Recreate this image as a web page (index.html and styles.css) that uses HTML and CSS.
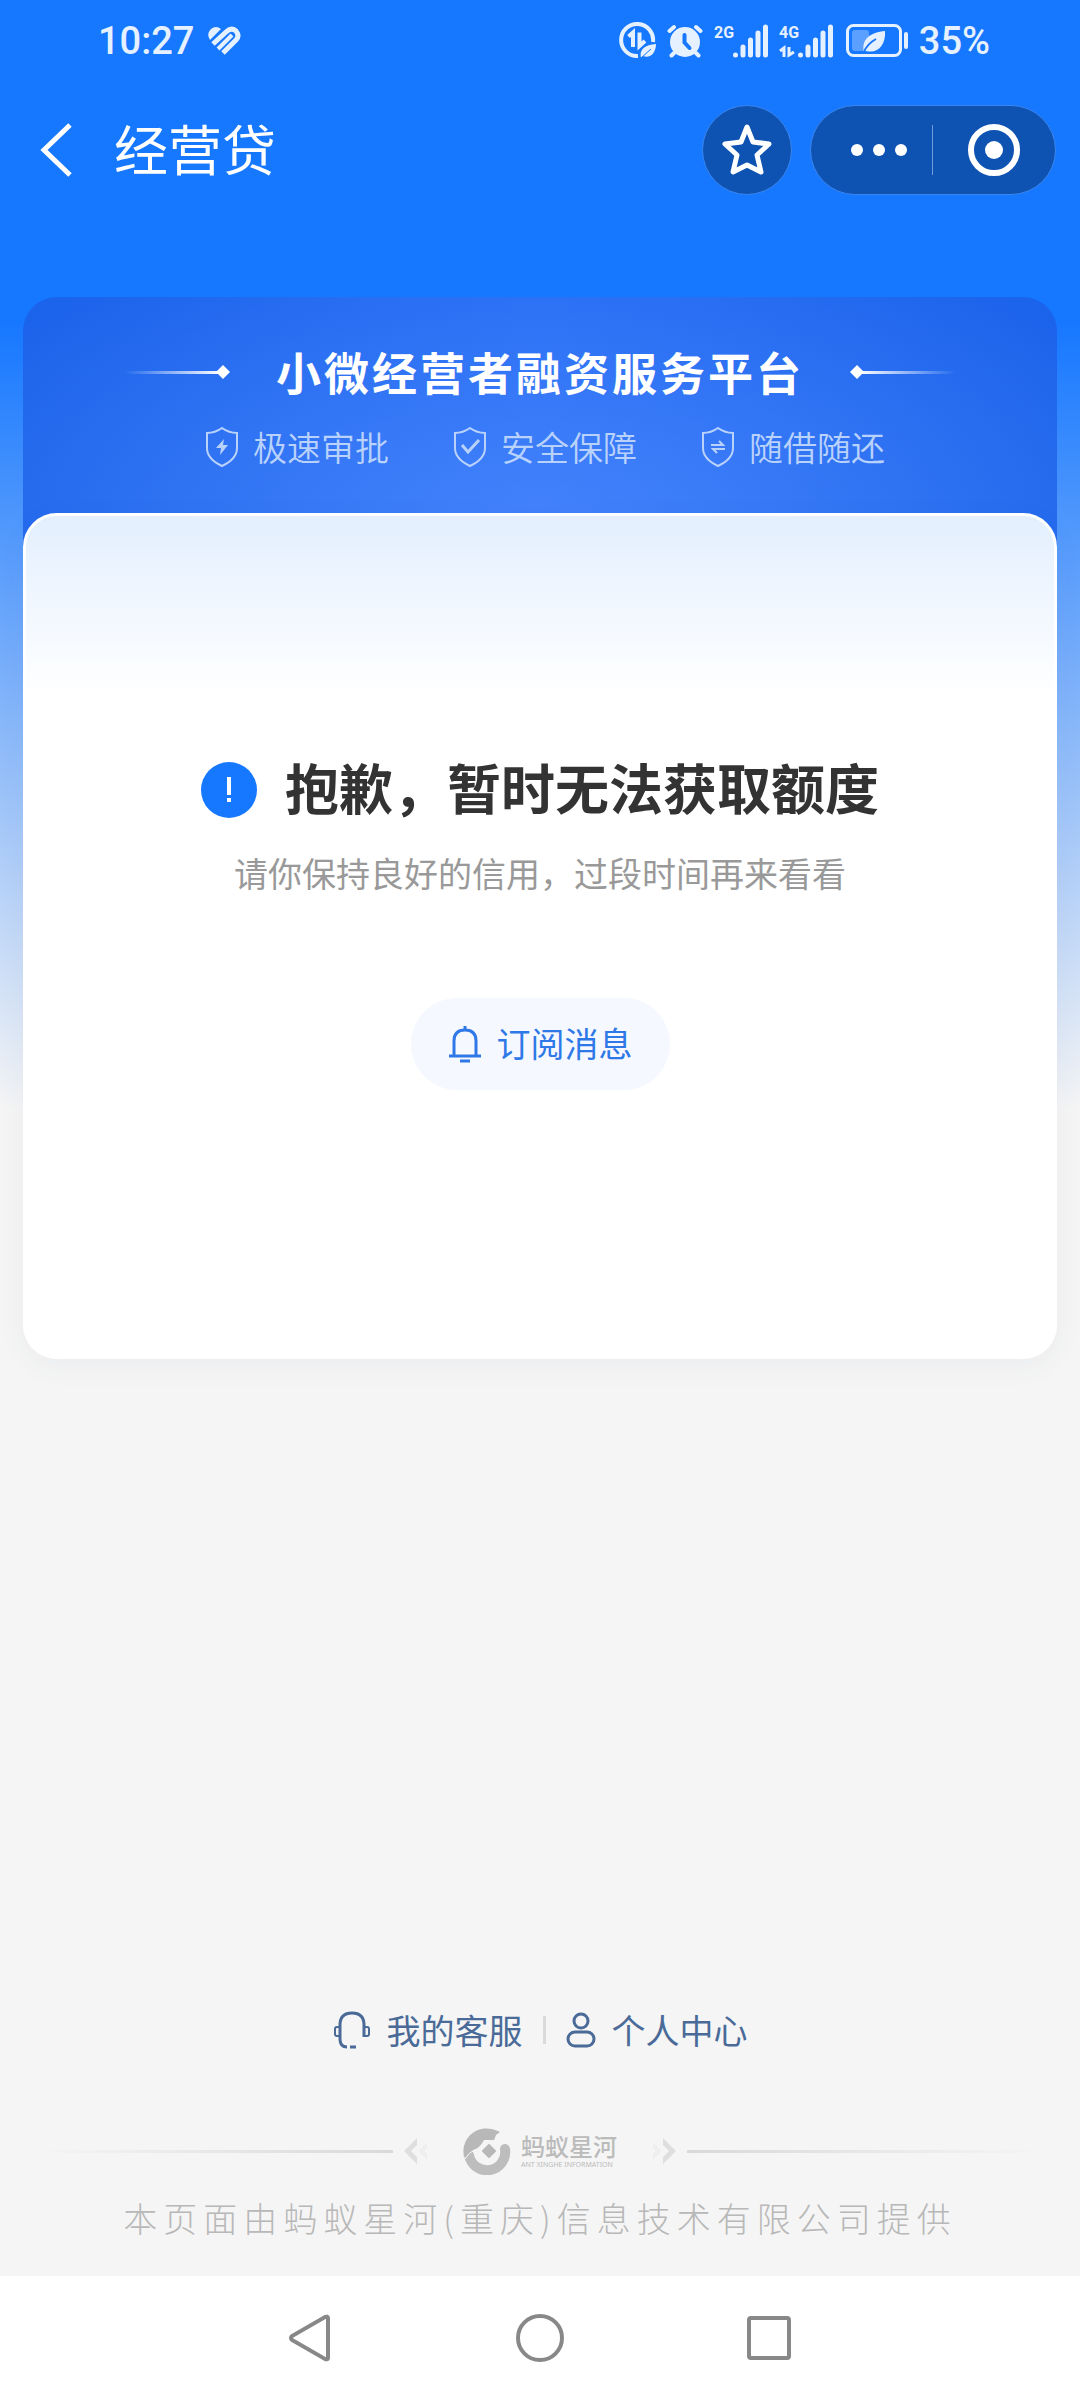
FILE: index.html
```html
<!DOCTYPE html>
<html lang="zh-CN">
<head>
<meta charset="utf-8">
<meta name="viewport" content="width=device-width, initial-scale=1">
<title>经营贷</title>
<link rel="stylesheet" href="styles.css">
</head>
<body>
<div class="page">
  <div class="status-bar">
    <div class="status-group status-left">
      <span>10:27</span>
      <svg width="34" height="30" viewBox="0 0 34 30" fill="none" stroke="currentColor" stroke-width="5">
        <path d="M3 14Q-1 8 4 3Q9 -1 14 3Z" fill="currentColor" stroke="none"/>
        <path d="M6 18 19 6Q24 1 29 5Q33 10 29 14L16 27"/>
        <path d="M11 23 25 9" stroke-width="4"/>
      </svg>
    </div>
    <div class="status-group status-right">
      <svg width="37" height="37" viewBox="0 0 37 37" fill="none" stroke="currentColor">
        <path d="M34 20A16 16 0 1 0 19 34" stroke-width="4"/>
        <path d="M9.500 14.500 14 10.500V25M20.500 10.500V24L26 19" stroke-width="4"/>
        <path d="M22 36C20 27 26 23 37 22C37 31 31 37 24 34" fill="currentColor" stroke="none"/>
        <path d="M22 36 32 27" stroke="#1677ff" stroke-width="1"/>
      </svg>
      <svg width="36" height="34" viewBox="0 0 36 34" fill="none" stroke="currentColor" stroke-width="4" stroke-linecap="round">
        <circle cx="18" cy="18" r="15" fill="currentColor" stroke="none"/>
        <path d="M2.500 7 7 3M33.500 7 29 3M7 29 4.500 31.500M29 29 31.500 31.500"/>
        <path d="M17.500 11V18.500L22.500 24" stroke="#1677ff"/>
      </svg>
      <svg width="54" height="34" viewBox="0 0 54 34" fill="none" stroke="currentColor" stroke-width="5" stroke-linecap="round">
        <text class="signal-label" x="0" y="14">2G</text>
        <path d="M21.500 31V31.100M29 23V31M36.500 16V31M44 9V31M51.500 3V31"/>
      </svg>
      <svg width="54" height="34" viewBox="0 0 54 34" fill="none" stroke="currentColor" stroke-width="5" stroke-linecap="round">
        <text class="signal-label" x="0" y="14">4G</text>
        <path d="M21.500 31V31.100M29 23V31M36.500 16V31M44 9V31M51.500 3V31"/>
        <path d="M1 27 5 24V33M10 23V31L15 28" stroke-width="3" stroke-linecap="butt"/>
      </svg>
      <svg width="64" height="34" viewBox="0 0 64 34" fill="none">
        <rect x="3.500" y="1.500" width="53" height="30" rx="6" stroke="currentColor" stroke-width="3"/>
        <rect x="8" y="6" width="17" height="21" rx="3" fill="#fff" opacity=".3"/>
        <path d="M20 28C17 15 27 8 41 7C42 21 34 30 22 27Z" fill="currentColor"/>
        <path d="M20 28Q23 20 32 15" stroke="#1677ff" stroke-width="2"/>
        <path d="M62 10V23" stroke="currentColor" stroke-width="4" stroke-linecap="round"/>
      </svg>
      <span>35%</span>
    </div>
  </div>

  <header class="nav-bar">
    <button class="back" type="button" aria-label="返回">
      <svg width="32" height="54" viewBox="0 0 32 54" fill="none" stroke="currentColor" stroke-width="5"><path d="M30 2 4 27 30 52"/></svg>
    </button>
    <h1 class="nav-title">经营贷</h1>
    <button class="pill favorite" type="button" aria-label="收藏">
      <svg width="52" height="52" viewBox="0 0 52 52" fill="none" stroke="currentColor" stroke-width="5" stroke-linejoin="round"><path d="M26 3 32 18 48 20 36 31 40 48 26 41 12 48 16 31 4 20 20 18Z"/></svg>
    </button>
    <div class="pill capsule">
      <button type="button" aria-label="更多">
        <svg width="58" height="14" viewBox="0 0 58 14" fill="currentColor"><circle cx="7" cy="7" r="6"/><circle cx="29" cy="7" r="6"/><circle cx="51" cy="7" r="6"/></svg>
      </button>
      <button type="button" aria-label="关闭">
        <svg width="54" height="54" viewBox="0 0 54 54"><circle cx="27" cy="27" r="23" fill="none" stroke="currentColor" stroke-width="6"/><circle cx="27" cy="27" r="9" fill="currentColor"/></svg>
      </button>
    </div>
  </header>

  <main class="card">
    <section class="banner">
      <div class="banner-heading">
        <svg width="106" height="16" viewBox="0 0 106 16">
          <defs><linearGradient id="ray"><stop offset="0" stop-color="#fff" stop-opacity="0"/><stop offset="1" stop-color="#fff"/></linearGradient></defs>
          <rect y="7" width="96" height="3" fill="url(#ray)"/><path d="M98 1 105 8 98 15 91 8Z" fill="#fff"/>
        </svg>
        <h2>小微经营者融资服务平台</h2>
        <svg width="106" height="16" viewBox="0 0 106 16">
          <defs><linearGradient id="ray-end"><stop offset="0" stop-color="#fff"/><stop offset="1" stop-color="#fff" stop-opacity="0"/></linearGradient></defs>
          <rect x="10" y="7" width="96" height="3" fill="url(#ray-end)"/><path d="M8 1 15 8 8 15 1 8Z" fill="#fff"/>
        </svg>
      </div>
      <ul class="features">
        <li>
          <svg width="34" height="42" viewBox="0 0 34 42" fill="none" stroke="currentColor" stroke-width="2"><path d="M17 2Q24 7 32 7V22Q32 33 17 40Q2 33 2 22V7Q10 7 17 2Z"/><path d="M19 13 11 22H16L15 29 23 19H18Z" fill="currentColor" stroke="none"/></svg>
          极速审批
        </li>
        <li>
          <svg width="34" height="42" viewBox="0 0 34 42" fill="none" stroke="currentColor" stroke-width="2"><path d="M17 2Q24 7 32 7V22Q32 33 17 40Q2 33 2 22V7Q10 7 17 2Z"/><path d="M9 19 15 26 26 14" stroke-width="3"/></svg>
          安全保障
        </li>
        <li>
          <svg width="34" height="42" viewBox="0 0 34 42" fill="none" stroke="currentColor" stroke-width="2"><path d="M17 2Q24 7 32 7V22Q32 33 17 40Q2 33 2 22V7Q10 7 17 2Z"/><path d="M10 19H22L18 15M24 23H12L16 27"/></svg>
          随借随还
        </li>
      </ul>
    </section>

    <section class="panel">
      <div class="notice">
        <svg width="56" height="56" viewBox="0 0 56 56"><circle cx="28" cy="28" r="28" fill="#1677ff"/><path d="M28 15V33M28 36V40" stroke="#fff" stroke-width="4"/></svg>
        <h2>抱歉，暂时无法获取额度</h2>
      </div>
      <p class="hint">请你保持良好的信用，过段时间再来看看</p>
      <button class="subscribe" type="button">
        <svg width="34" height="38" viewBox="0 0 34 38" fill="none" stroke="currentColor" stroke-width="3"><path d="M17 1V6M6 31V16Q6 5 17 5Q28 5 28 16V31M1 31H33M12 36H22"/></svg>
        <span>订阅消息</span>
      </button>
    </section>
  </main>

  <footer class="footer">
    <nav class="links">
      <a href="#service">
        <svg width="38" height="38" viewBox="0 0 38 38" fill="none" stroke="currentColor" stroke-width="2"><path d="M7 26V14Q7 2 19 2Q31 2 31 14V26M7 25V28Q7 36 14 36M17 36H23" stroke-width="3"/><path d="M7 16H4Q2 16 2 18V23Q2 25 4 25H7M31 16H34Q36 16 36 18V23Q36 25 34 25H31"/></svg>
        我的客服
      </a>
      <span class="divider"></span>
      <a href="#profile">
        <svg width="30" height="38" viewBox="0 0 30 38" fill="none" stroke="currentColor" stroke-width="3"><circle cx="15" cy="10" r="7"/><rect x="2" y="21" width="26" height="14" rx="7"/></svg>
        个人中心
      </a>
    </nav>

    <div class="brand">
      <span class="rule"></span>
      <svg width="28" height="28" viewBox="0 0 28 28" fill="#dedede"><path d="M14 1V8L8 14 14 20V27L1 14Z"/><path d="M24 5V11L21 14 24 17V23L16 14Z" opacity=".3"/></svg>
      <div class="brand-mark">
        <svg width="48" height="48" viewBox="0 0 48 48" fill="none">
          <path d="M6 28A18 18 0 0 0 42 22" stroke="#bdbdbd" stroke-width="10" stroke-linecap="round"/>
          <path d="M1 30C-3 10 16 -6 37 5L33 8 31 13H21Q17 21 9 24Q4 27 1 30Z" fill="#b8b8b8"/>
          <path d="M2 32Q6 25 13 22" stroke="#f5f5f5" stroke-width="1"/>
          <path d="M26 18 32 24 26 30 20 24Z" fill="#b8b8b8" stroke="#b8b8b8" stroke-width="2" stroke-linejoin="round"/>
        </svg>
        <div class="brand-name"><strong>蚂蚁星河</strong><small>ANT XINGHE INFORMATION</small></div>
      </div>
      <svg width="28" height="28" viewBox="0 0 28 28" fill="#dedede"><path d="M14 1V8L20 14 14 20V27L27 14Z"/><path d="M4 5V11L7 14 4 17V23L12 14Z" opacity=".3"/></svg>
      <span class="rule rule-end"></span>
    </div>
    <p class="provider">本页面由蚂蚁星河(重庆)信息技术有限公司提供</p>
  </footer>

  <div class="system-nav">
    <button type="button" aria-label="后退"><svg width="48" height="48" viewBox="0 0 48 48"><path d="M41 4V44Q41 46 38 45L5 26Q3 24 5 22L38 3Q41 2 41 4Z"/></svg></button>
    <button type="button" aria-label="主屏幕"><svg width="48" height="48" viewBox="0 0 48 48"><circle cx="24" cy="24" r="22"/></svg></button>
    <button type="button" aria-label="最近任务"><svg width="48" height="48" viewBox="0 0 48 48"><rect x="4" y="4" width="40" height="40" rx="2"/></svg></button>
  </div>
</div>
</body>
</html>
```

FILE: styles.css
```css
* { box-sizing: border-box; }

body {
  margin: 0;
  background: #f5f5f5;
  font-family: "Noto Sans CJK SC", sans-serif;
}

h1, h2, p, ul { margin: 0; padding: 0; }

svg { display: block; flex: none; }

button {
  margin: 0;
  padding: 0;
  border: 0;
  background: none;
  color: inherit;
  font: inherit;
}

a { color: inherit; text-decoration: none; }

.page {
  display: flex;
  flex-direction: column;
  min-height: 100vh;
  background: linear-gradient(#1677ff 320px, #f5f5f5 1110px);
}

.status-bar {
  display: flex;
  justify-content: space-between;
  align-items: center;
  height: 81px;
  padding: 0 90px 0 98px;
  color: #e6f1ff;
  font: 500 38px/40px Roboto, sans-serif;
}

.status-group { display: flex; align-items: center; }
.status-left { gap: 13px; }
.status-right { gap: 11px; }

.signal-label {
  fill: currentColor;
  stroke: none;
  font: 700 16px Roboto, sans-serif;
}

.nav-bar {
  display: flex;
  align-items: center;
  height: 138px;
  padding: 0 24px 0 40px;
  color: #fff;
}

.nav-title {
  flex: 1;
  margin-left: 42px;
  padding-bottom: 4px;
  font-size: 54px;
  font-weight: 400;
  line-height: 72px;
}

.pill {
  height: 90px;
  border: 1px solid #3a86ee;
  border-radius: 45px;
  background: #0e52b2;
}

.favorite {
  display: grid;
  place-items: center;
  width: 90px;
  margin-right: 18px;
}

.capsule { display: flex; align-items: center; width: 246px; }

.capsule button {
  display: flex;
  flex: 1;
  align-items: center;
  justify-content: center;
  height: 50px;
}

.capsule button:first-child {
  flex: none;
  width: 122px;
  padding-left: 14px;
  border-right: 1px solid #6f9cdb;
}

.card {
  margin: 78px 23px 0;
  border-radius: 34px;
  background:
    radial-gradient(ellipse 70% 100% at 50% 80%, rgba(86, 144, 255, .6), rgba(60, 125, 255, 0)) no-repeat 0 0 / 100% 280px,
    linear-gradient(90deg, #1b63ea, #276df5 50%, #1b63ea) no-repeat 0 0 / 100% 280px;
}

.banner {
  display: flex;
  flex-direction: column;
  align-items: center;
  gap: 16px;
  height: 216px;
  padding-top: 42px;
  color: #fff;
}

.banner-heading { display: flex; align-items: center; gap: 45px; }

.banner-heading h2 {
  font-size: 45px;
  font-weight: 700;
  line-height: 66px;
  letter-spacing: 3px;
}

.features {
  display: flex;
  gap: 64px;
  padding-left: 10px;
  list-style: none;
  color: #b9d2fc;
  font-size: 34px;
  font-weight: 350;
  line-height: 52px;
}

.features li { display: flex; align-items: center; gap: 14px; }

.panel {
  display: flex;
  flex-direction: column;
  align-items: center;
  min-height: 846px;
  padding: 234px 24px 0;
  border: 3px solid #fff;
  border-radius: 34px;
  background: linear-gradient(#e3effe, #fff 180px);
  box-shadow: 0 8px 28px rgba(60, 80, 120, .05);
}

.notice { display: flex; align-items: center; gap: 28px; color: #333; }

.notice h2 {
  padding-bottom: 6px;
  font-size: 54px;
  font-weight: 700;
  line-height: 74px;
}

.hint {
  margin-top: 17px;
  color: #999;
  font-size: 34px;
  line-height: 52px;
}

.subscribe {
  display: flex;
  align-items: center;
  gap: 15px;
  margin-top: 99px;
  padding: 20px 37px;
  border-radius: 46px;
  background: #f5f8fe;
  color: #2f78e8;
  font-size: 34px;
  line-height: 52px;
}

.subscribe span { padding-bottom: 2px; line-height: 50px; }

.footer { margin-top: auto; padding: 40px 36px 32px; }

.links {
  display: flex;
  justify-content: center;
  align-items: center;
  color: #4a6a98;
  font-size: 34px;
  line-height: 52px;
}

.links a { display: flex; align-items: center; gap: 16px; }

.divider {
  width: 3px;
  height: 28px;
  margin: 0 20px;
  background: #dadada;
}

.brand {
  display: flex;
  align-items: center;
  gap: 10px;
  margin-top: 71px;
}

.rule {
  flex: 1;
  height: 3px;
  background: linear-gradient(90deg, rgba(217, 217, 217, 0), #d9d9d9);
}

.rule-end { background: linear-gradient(90deg, #d9d9d9, rgba(217, 217, 217, 0)); }

.brand-mark {
  display: flex;
  align-items: center;
  gap: 10px;
  margin: 0 22px;
  color: #bbb;
}

.brand-name { display: flex; flex-direction: column; }
.brand-name strong { font-size: 24px; font-weight: 500; line-height: 28px; }
.brand-name small { font: 7px/10px "Noto Sans", sans-serif; white-space: nowrap; }

.provider {
  margin-top: 17px;
  color: #b8b8b8;
  font-size: 34px;
  font-weight: 300;
  line-height: 52px;
  letter-spacing: 6px;
  text-align: center;
}

.system-nav {
  display: flex;
  justify-content: center;
  align-items: center;
  gap: 181px;
  height: 124px;
  background: #fff;
}

.system-nav svg { fill: none; stroke: #888; stroke-width: 4; }
```
